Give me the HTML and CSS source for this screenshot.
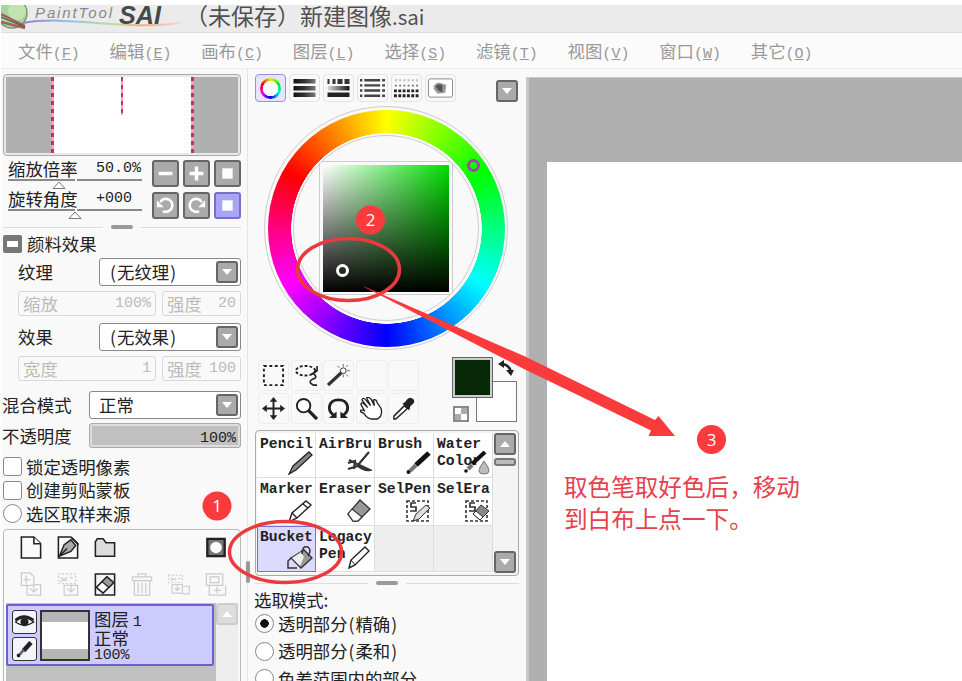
FILE: index.html
```html
<!DOCTYPE html>
<html lang="zh">
<head>
    <meta charset="UTF-8">
    <meta name="viewport" content="width=device-width, initial-scale=1.0">
    <title>PaintTool SAI</title>
    <link rel="stylesheet" href="styles.css">
</head>
<body>
<div class="app">
    <header class="titlebar">
        <svg class="logo" width="184" height="27" viewBox="0 0 184 27">
            <defs>
                <linearGradient id="rainbow">
                    <stop offset="0" stop-color="#9a7bd0"/><stop offset=".3" stop-color="#92c4f0"/>
                    <stop offset=".55" stop-color="#b5e0a0"/><stop offset=".75" stop-color="#f0b080"/>
                    <stop offset="1" stop-color="#f5dada"/>
                </linearGradient>
            </defs>
            <circle cx="11" cy="8" r="15" fill="#a9d3a0" stroke="#6d9f72" stroke-width="1.5"/>
            <circle cx="16" cy="6" r="9" fill="#c3e3b0"/>
            <path d="M0 9l24 12M0 17l24 6" stroke="#a3625c" stroke-width="2.5"/>
            <path d="M0 12l24 10" stroke="#555" stroke-width="1.2"/>
            <path d="M22 18C50 13 80 17 110 19s55 2 72-2" fill="none" stroke="url(#rainbow)" stroke-width="2"/>
            <text x="34" y="13" class="logo-paint" textLength="77">PaintTool</text>
            <text x="118" y="19" class="logo-sai" textLength="42" lengthAdjust="spacingAndGlyphs">SAI</text>
        </svg>
        <span class="doc-name">（未保存）新建图像<i class="ext">.sai</i></span>
    </header>

    <nav class="menubar">
        <span>文件<i>(<u>F</u>)</i></span>
        <span>编辑<i>(<u>E</u>)</i></span>
        <span>画布<i>(<u>C</u>)</i></span>
        <span>图层<i>(<u>L</u>)</i></span>
        <span>选择<i>(<u>S</u>)</i></span>
        <span>滤镜<i>(<u>T</u>)</i></span>
        <span>视图<i>(<u>V</u>)</i></span>
        <span>窗口<i>(<u>W</u>)</i></span>
        <span>其它<i>(<u>O</u>)</i></span>
    </nav>

    <main class="work">
        <!-- 左侧：导航器和图层 -->
        <section class="left">
            <div class="navigator"><div class="nav-page"><i></i></div></div>

            <div class="view-ctrl">
                <div class="sliders">
                    <div class="slider"><span>缩放倍率</span><b>50.0%</b>
                        <svg width="134" height="11" viewBox="0 0 134 11"><path d="M0 1h67M69 1h65" stroke="#666" stroke-width="1.6"/><path d="M51 3l6 6.500H45z" fill="#fff" stroke="#777"/></svg>
                    </div>
                    <div class="slider"><span>旋转角度</span><b>+000</b>
                        <svg width="134" height="11" viewBox="0 0 134 11"><path d="M0 1h67M69 1h65" stroke="#666" stroke-width="1.6"/><path d="M67 3l6 6.500H61z" fill="#fff" stroke="#777"/></svg>
                    </div>
                </div>
                <div class="btns">
                    <span class="btn"><svg viewBox="0 0 22 22"><path d="M3 11h16" stroke="#fff" stroke-width="4"/></svg></span>
                    <span class="btn"><svg viewBox="0 0 22 22"><path d="M3 11h16M11 3v16" stroke="#fff" stroke-width="4"/></svg></span>
                    <span class="btn"><svg viewBox="0 0 22 22"><path d="M5 5h12v12H5z" fill="#fff"/></svg></span>
                    <span class="btn"><svg viewBox="0 0 22 22"><path d="M5 7a7.500 7.500 0 1 1 3 10.500" fill="none" stroke="#fff" stroke-width="3"/><path d="M1 5v8h8z" fill="#fff"/></svg></span>
                    <span class="btn"><svg viewBox="0 0 22 22"><path d="M17 7a7.500 7.500 0 1 0-3 10.500" fill="none" stroke="#fff" stroke-width="3"/><path d="M21 5v8h-8z" fill="#fff"/></svg></span>
                    <span class="btn on"><svg viewBox="0 0 22 22"><path d="M5 5h12v12H5z" fill="#fff"/></svg></span>
                </div>
            </div>

            <div class="grip"><i></i></div>

            <div class="effect-title"><span class="fold"></span>颜料效果</div>
            <div class="row first"><label>纹理</label><div class="select"><span><i>(</i>无纹理<i>)</i></span><em class="drop"></em></div></div>
            <div class="row off"><div class="field wide">缩放<b>100%</b></div><div class="field">强度<b>20</b></div></div>
            <div class="row second"><label>效果</label><div class="select"><span><i>(</i>无效果<i>)</i></span><em class="drop"></em></div></div>
            <div class="row off"><div class="field wide">宽度<b>1</b></div><div class="field">强度<b>100</b></div></div>

            <div class="row mode"><label>混合模式</label><div class="select"><span>正常</span><em class="drop"></em></div></div>
            <div class="row opacity"><label>不透明度</label><div class="meter"><b>100%</b></div></div>

            <div class="checks">
                <div><i class="box"></i>锁定透明像素</div>
                <div><i class="box"></i>创建剪贴蒙板</div>
                <div><i class="box round"></i>选区取样来源</div>
            </div>

            <div class="layers">
                <div class="layer-tools">
                    <svg viewBox="0 0 24 26"><path d="M2 2h13l7 7v15H2z" class="ink"/><path d="M15 2v7h7" class="ink"/></svg>
                    <svg viewBox="0 0 24 26"><path d="M2 2h13l7 7v15H2z" class="ink"/><path d="M3 22l5-12 7-5 5 6-5 6z" fill="#aaa" stroke="#222" stroke-width="1.500"/><path d="M3 22l8-8M16 3l7 7" stroke="#222" stroke-width="1.500"/></svg>
                    <svg viewBox="0 0 24 26"><path d="M2 7l2-3h6l3 4h9v14H2z" fill="#ddd" stroke="#222" stroke-width="1.600"/></svg>
                    <i></i><i></i>
                    <svg viewBox="0 0 24 26"><path d="M3 4h18v18H3z" fill="#777" stroke="#222" stroke-width="2.500"/><circle cx="12" cy="13" r="6" fill="#fff"/></svg>
                    <svg viewBox="0 0 24 26" class="dim"><path d="M2 1h9l4 4v9H2zM7 4v8M4 8h7M8 14v10h14V13h-7M15 13v8m-4-4l4 4 4-4"/></svg>
                    <svg viewBox="0 0 24 26" class="dim"><path d="M2 2h18v10H2z" stroke-dasharray="2 2"/><path d="M4 6l7 3M4 10l7-4M14 6h3M8 14h14v10H8zM15 13v8m-4-4l4 4 4-4"/></svg>
                    <svg viewBox="0 0 24 26"><path d="M2 2h20v22H2z" fill="#f4f4f4" stroke="#222" stroke-width="1.600"/><path d="M3 16L14 5l7 6-11 11z" fill="#fff" stroke="#222" stroke-width="1.600"/><path d="M9 10L14 5l7 6-5 5z" fill="#999" stroke="#222" stroke-width="1.300"/></svg>
                    <svg viewBox="0 0 24 26" class="dim"><path d="M2 5h20v4H2zM8 5V2h8v3M4 9v15h16V9M8 11v11M12 11v11M16 11v11"/></svg>
                    <svg viewBox="0 0 28 26" class="dim"><path d="M2 2h16v9H2z" stroke-dasharray="2 2"/><path d="M4 5l6 3M4 9l6-3M13 6h3M6 13h12v10H6zM12 12v8m-3-3l3 3 3-3M18 15h8v9h-8"/></svg>
                    <svg viewBox="0 0 24 26" class="dim"><path d="M2 2h17v12H2zM6 5h9v6H6zM5 14v10h17V14M13 15v7M10 19h7"/></svg>
                </div>
                <div class="layer-list">
                    <div class="layer">
                        <div class="flags">
                            <svg viewBox="0 0 24 24"><path d="M2 12q9-9 20 0-10 7-20 0" fill="#fff" stroke="#222" stroke-width="1.500"/><circle cx="12" cy="12" r="4.500" fill="#222"/><path d="M2 10q9-8 20 0" fill="none" stroke="#222" stroke-width="2.500"/></svg>
                            <svg viewBox="0 0 24 24"><path d="M19 5l-8 9" stroke="#222" stroke-width="5"/><path d="M11 13l-4 5" stroke="#666" stroke-width="3"/><circle cx="5.500" cy="19" r="2" fill="#222"/></svg>
                        </div>
                        <div class="thumb"></div>
                        <div class="layer-info"><span>图层 <b>1</b></span><span>正常</span><b>100%</b></div>
                    </div>
                    <div class="track"><em class="up"></em></div>
                </div>
            </div>
        </section>

        <!-- 中间：颜色和画笔 -->
        <section class="middle">
            <i class="vgrip"></i>
            <div class="tabs">
                <span class="on"><i class="mini-wheel"></i></span>
                <span><svg viewBox="0 0 24 20"><path d="M1 1h22v4.500H1zM1 8h22v4.500H1zM1 14.500h22V19H1z" fill="url(#bar)"/></svg></span>
                <span><svg viewBox="0 0 24 20"><path d="M1 1h2v5H1zM6 1h3v5H6zM11 1h5v5h-5zM18 1h5v5h-5z" fill="#333"/><path d="M1 8h22v4.500H1z" fill="url(#bar2)"/><path d="M1 14.500h22V19H1z" fill="#222"/></svg></span>
                <span><svg viewBox="0 0 26 20"><path d="M0 2h26M0 7.300h26M0 12.600h26M0 18h26" stroke="#444" stroke-width="2.500"/><path d="M3.500 0v20M22 0v20" stroke="#fdfdfd" stroke-width="2"/></svg></span>
                <span><svg viewBox="0 0 26 20"><path d="M1 2h24" stroke="#bbb" stroke-width="2" stroke-dasharray="2 2.400"/><path d="M1 7.500h24" stroke="#777" stroke-width="2" stroke-dasharray="2 2.400"/><path d="M0 13h26M0 18h26" stroke="#222" stroke-width="3" stroke-dasharray="3 1.500"/></svg></span>
                <span><svg viewBox="0 0 26 20"><rect x=".5" y=".5" width="25" height="19" rx="2" fill="#fff" stroke="#888"/><path d="M6 8q3-5 8-3l5 2-1 8-8 1-4-5z" fill="#999"/><path d="M8 8q3-3 7-1v7q-5 0-7-6" fill="#555"/></svg></span>
                <em class="drop"></em>
            </div>
            <svg class="defs" width="0" height="0"><defs>
                <linearGradient id="bar"><stop offset="0" stop-color="#111"/><stop offset=".5" stop-color="#333"/><stop offset="1" stop-color="#777"/></linearGradient>
                <linearGradient id="bar2"><stop offset="0" stop-color="#ddd"/><stop offset="1" stop-color="#111"/></linearGradient>
            </defs></svg>

            <div class="wheel">
                <div class="hue"></div>
                <svg class="wheel-lines" viewBox="0 0 244 244"><circle cx="122" cy="122" r="121.500"/><circle cx="122" cy="122" r="92.500"/><path d="M57 55.500h130M55.500 57v130M188.500 57v130M57 188.500h130"/></svg>
                <div class="sv"></div>
                <i class="hue-mark"></i><i class="sv-mark"></i>
            </div>

            <div class="tool-row">
                <div class="tools">
                    <span><svg viewBox="0 0 24 24"><path d="M2 2h20v20H2z" fill="none" stroke="#222" stroke-width="2" stroke-dasharray="3 2.700"/></svg></span>
                    <span><svg viewBox="0 0 24 24"><ellipse cx="11" cy="7" rx="10" ry="5" fill="none" stroke="#222" stroke-width="2" stroke-dasharray="3 2"/><path d="M23 2v5l-6 4M19 10q6 4-1 6-5 3 1 6h4" fill="none" stroke="#222" stroke-width="1.700"/></svg></span>
                    <span><svg viewBox="0 0 24 24"><path d="M1 22L16 8" stroke="#333" stroke-width="3.500"/><circle cx="17" cy="7" r="3" fill="#fff" stroke="#333"/><path d="M17 0v3M24 7h-3M11 2l2 2M22 1l-2 2M22 13l-2-2M17 14v-3" stroke="#666"/></svg></span>
                    <span></span><span></span>
                    <span><svg viewBox="0 0 24 24"><path d="M12 3v18M3 12h18" stroke="#222" stroke-width="2"/><path d="M12 0l4 5H8zM12 24l4-5H8zM0 12l5-4v8zM24 12l-5-4v8z" fill="#222"/></svg></span>
                    <span><svg viewBox="0 0 24 24"><circle cx="9" cy="9" r="7" fill="#fff" stroke="#222" stroke-width="2"/><path d="M14 14l9 9" stroke="#222" stroke-width="3.500"/></svg></span>
                    <span><svg viewBox="0 0 24 24"><path d="M9 20C-1 15 1 3 12 3s13 12 3 17" fill="none" stroke="#222" stroke-width="3"/><path d="M2 22h8v-7zM22 22h-8v-7z" fill="#222"/></svg></span>
                    <span><svg viewBox="0 0 24 24"><path d="M5 15L1 8q0-3 3-1l4 4-6-8q1-3 4 0l5 6-4-8q2-2 5 2l3 6-1-6q3-1 4 3l4 6q2 8-4 11h-6q-5-1-8-6l-4-2q0-2 4-1" fill="#fff" stroke="#222" stroke-width="1.400"/></svg></span>
                    <span><svg viewBox="0 0 24 24"><path d="M13 9l3 3L4 23H2v-3z" fill="#fff" stroke="#222" stroke-width="1.500"/><path d="M11 7l7 7 1-4 4-4q1-4-3-5-3-1-6 4z" fill="#222"/></svg></span>
                </div>
                <div class="swatches">
                    <i class="bg"></i><i class="fg"></i>
                    <svg class="swap" viewBox="0 0 16 16"><path d="M3 4q8 0 10 8" fill="none" stroke="#222" stroke-width="2.500"/><path d="M0 4l6-4v8zM13 16l-5-6h8z" fill="#222"/></svg>
                    <svg class="clear" viewBox="0 0 16 16"><path d="M1 1h14v14H1z" fill="#fff" stroke="#666" stroke-width="1.500"/><path d="M8 2h6v6H8zM2 8h6v6H2z" fill="#aaa"/></svg>
                </div>
            </div>

            <div class="brush-panel">
                <div class="brushes">
                    <div>Pencil<svg viewBox="0 0 26 24"><path d="M2 23l4-8L22 1l3 3L9 19z" fill="#888" stroke="#222" stroke-width="1.300"/></svg></div>
                    <div>AirBru<svg viewBox="0 0 26 24"><path d="M12 14L23 1M3 9l8 4 13 6q-6 1-12-4l-10 3M2 12l7-2-1 8" fill="none" stroke="#333" stroke-width="2.200"/></svg></div>
                    <div>Brush<svg viewBox="0 0 26 24"><path d="M11 14L24 2" stroke="#111" stroke-width="5"/><path d="M11 14l-6 6" stroke="#777" stroke-width="4"/><circle cx="3.500" cy="21" r="2" fill="#111"/></svg></div>
                    <div>Water<br>Color<svg viewBox="0 0 26 24"><path d="M8 13L21 1" stroke="#111" stroke-width="4"/><path d="M8 14l-4 4" stroke="#777" stroke-width="4"/><circle cx="2" cy="20" r="1.800" fill="#111"/><path d="M20 10q10 13 0 13t0-13" fill="#bbb" stroke="#777"/></svg></div>
                    <div>Marker<svg viewBox="0 0 26 24"><path d="M2 23l3-9L19 2l5 4L10 19z" fill="#fff" stroke="#222" stroke-width="1.400"/><path d="M5 14l5 5M16 5l5 4M2 23l5-2" stroke="#222" stroke-width="1.300"/></svg></div>
                    <div>Eraser<svg viewBox="0 0 26 24"><path d="M2 15L14 1l10 9-12 12H7z" fill="#999" stroke="#333" stroke-width="1.300"/><path d="M2 15l4-5 10 8-4 4H7z" fill="#fff" stroke="#333" stroke-width="1.200"/></svg></div>
                    <div>SelPen<svg viewBox="0 0 26 24"><path d="M2 2h21v20H2z" fill="none" stroke="#333" stroke-width="1.600" stroke-dasharray="3 2"/><path d="M11 4H6v4h5v4H5" fill="none" stroke="#333" stroke-width="1.700"/><path d="M8 22l3-7L21 6l4 3-11 11z" fill="#ddd" stroke="#333"/></svg></div>
                    <div>SelEra<svg viewBox="0 0 26 24"><path d="M2 2h21v20H2z" fill="none" stroke="#333" stroke-width="1.600" stroke-dasharray="3 2"/><path d="M11 4H6v4h5v4H5" fill="none" stroke="#333" stroke-width="1.700"/><path d="M9 15l8-9 8 6-9 9z" fill="#888" stroke="#333"/><path d="M9 15l3-3 7 6-3 3z" fill="#fff" stroke="#333"/></svg></div>
                    <div class="on">Bucket<svg viewBox="0 0 26 24"><path d="M4 13L17 5l8 8-11 10z" fill="#999" stroke="#333" stroke-width="1.400"/><path d="M5 13l9-6 3 5-4 9z" fill="#eee"/><path d="M15 9q0-9 6-7 4 3 0 9M4 13l-3 3v7h9" fill="none" stroke="#333" stroke-width="1.500"/></svg></div>
                    <div>Legacy<br>Pen<svg viewBox="0 0 26 24"><path d="M3 23l2-8L19 2l4 4L9 20z" fill="#fff" stroke="#222" stroke-width="1.400"/><path d="M5 15l4 5" stroke="#222"/></svg></div>
                    <div class="none"></div>
                    <div class="none"></div>
                </div>
                <div class="scroll"><em class="drop up-arrow"></em><i></i><em class="drop down"></em></div>
            </div>

            <div class="grip"><i></i></div>

            <div class="options">
                <h4>选取模式<i>:</i></h4>
                <div><i class="box round checked"></i><span>透明部分<i>(</i>精确<i>)</i></span></div>
                <div><i class="box round"></i><span>透明部分<i>(</i>柔和<i>)</i></span></div>
                <div><i class="box round"></i><span>色差范围内的部分</span></div>
            </div>
        </section>

        <section class="canvas"><div class="paper"><p>取色笔取好色后，移动<br>到白布上点一下。</p></div></section>
    </main>

    <!-- 教程标注 -->
    <svg class="notes" width="962" height="681" viewBox="0 0 962 681">
        <ellipse cx="285.500" cy="552" rx="56" ry="30.500"/>
        <ellipse cx="348.500" cy="269.500" rx="51" ry="31"/>
        <path d="M363 286L524 356L655 420L658.500 416L675 436H648.500L651 430.500L524 369L366 288z"/>
        <circle cx="217" cy="506" r="14.500"/><text x="217" y="512">1</text>
        <circle cx="370.500" cy="220" r="14.500"/><text x="370.500" y="226">2</text>
        <circle cx="711.500" cy="439.500" r="14.500"/><text x="711.500" y="445.500">3</text>
    </svg>
</div>
</body>
</html>
```
FILE: styles.css
```css
* {
    margin: 0;
    padding: 0;
    box-sizing: border-box;
}

html, body {
    width: 100%;
    height: 100%;
    overflow: hidden;
    background: #fff;
}

body {
    font: 17.4px/20px "Noto Sans CJK SC", sans-serif;
    color: #222;
}

i, em {
    font-style: normal;
}

b {
    font: 15px/20px "Liberation Mono", monospace;
}

svg {
    display: block;
}

.app {
    position: relative;
    height: 681px;
    padding: 5px 0 0 1px;
    display: flex;
    flex-direction: column;
    overflow: hidden;
}

.titlebar {
    display: flex;
    flex: 0 0 28px;
    background: #ebebeb;
    border-bottom: 1px solid #ddd;
}

.logo-paint {
    font: italic 15px "Liberation Sans", sans-serif;
    fill: #888;
}

.logo-sai {
    font: italic bold 25px "Liberation Sans", sans-serif;
    fill: #484848;
}

.doc-name {
    font-size: 23px;
    line-height: 21px;
    color: #505050;
    white-space: nowrap;
}

.doc-name .ext {
    font-size: 20.5px;
}

.menubar {
    flex: 0 0 35px;
    display: flex;
    padding-left: 17px;
    background: #fbfbfb;
    border-bottom: 1px solid #eee;
    color: #999;
    line-height: 35px;
}

.menubar span {
    flex: 0 0 91.6px;
    white-space: nowrap;
}

.menubar i {
    font: 15px "Liberation Mono", monospace;
}

.work {
    flex: 1;
    display: flex;
    background: #f9f9f9;
    min-height: 0;
}

.left {
    flex: 0 0 247px;
    min-width: 0;
    padding: 5px 6px 0 2px;
    border-right: 1px solid #e4e4e4;
}

.navigator {
    height: 82px;
    border: 1px solid #aaa;
    border-radius: 4px;
    padding: 2px;
    background: #e8e8e8;
}

.nav-page {
    height: 76px;
    background: linear-gradient(90deg, #b0b0b0 46px, #fff 46px, #fff 186px, #b0b0b0 186px);
    display: flex;
    padding-left: 45px;
}

.nav-page::before, .nav-page::after, .nav-page i {
    content: "";
    width: 3px;
    height: 76px;
    background: repeating-linear-gradient(#b83860 0 4px, #ff9cbc 4px 8px);
}

.nav-page i {
    width: 2px;
    height: 38px;
    margin: 0 68px 0 67px;
}

.view-ctrl {
    display: flex;
    justify-content: space-between;
    padding: 4px 0 0 5px;
}

.slider {
    display: flex;
    flex-wrap: wrap;
    justify-content: space-between;
    width: 134px;
    height: 30px;
    line-height: 18px;
}

.slider b {
    width: 46px;
    line-height: 18px;
}

.btns {
    display: grid;
    grid-template-columns: repeat(3, 27px);
    gap: 4px;
}

.btn {
    height: 27px;
    border: 2px solid #666;
    border-radius: 3px;
    background: #aaa;
    padding: 2px;
}

.btn.on {
    background: #a9a4f4;
    border-color: #7770c8;
}

.grip {
    display: flex;
    align-items: center;
    gap: 8px;
    height: 10px;
}

.grip::before, .grip::after {
    content: "";
    flex: 1;
    height: 1px;
    background: #ddd;
}

.grip i {
    width: 22px;
    height: 4px;
    border-radius: 2px;
    background: #999;
}

.left .grip {
    margin-top: 2px;
}

.effect-title {
    display: flex;
    align-items: center;
    gap: 5px;
    height: 18px;
    margin-top: 3px;
}

.fold {
    width: 19px;
    height: 18px;
    border: 6px solid #777;
    border-width: 6px 4px;
    border-radius: 2px;
    background: #fff;
}

.row {
    display: flex;
    align-items: center;
    height: 27px;
    margin-top: 6px;
}

.row label {
    flex: 0 0 96px;
    padding-left: 15px;
}

.row.first {
    margin-top: 5px;
}

.row.second {
    margin-top: 7px;
}

.select {
    flex: 1;
    display: flex;
    align-items: center;
    justify-content: space-between;
    height: 28px;
    padding: 0 2px 0 9px;
    border: 1px solid #888;
    border-radius: 3px;
    background: #fff;
}

.select i {
    display: inline-block;
    width: 8px;
    text-align: center;
}

.drop, .up {
    width: 22px;
    height: 22px;
    border: 2px solid #666;
    border-radius: 3px;
    background: #aaa;
    display: flex;
    align-items: center;
    justify-content: center;
}

.drop::after {
    content: "";
    border: 5px solid transparent;
    border-top: 6px solid #fff;
    border-bottom: 0;
}

.row.off {
    height: 25px;
    padding-left: 15px;
    gap: 6px;
    color: #bbb;
}

.field {
    flex: 1;
    display: flex;
    align-items: center;
    justify-content: space-between;
    height: 25px;
    padding: 0 4px;
    border: 1px solid #d8d8d8;
    border-radius: 3px;
    white-space: nowrap;
}

.field.wide {
    flex: 0 0 138px;
}

.row.mode {
    height: 28px;
    margin-top: 10px;
}

.row.mode label, .row.opacity label {
    flex-basis: 86px;
    padding: 0;
    margin: 0 1px 0 -1px;
}

.row.opacity {
    height: 25px;
    margin-top: 4px;
}

.meter {
    flex: 1;
    height: 25px;
    padding: 1px 4px;
    border: 1px solid #aaa;
    border-radius: 3px;
    background: #c0c0c0;
    box-shadow: inset 0 0 0 2px #ddd;
    text-align: right;
}

.checks {
    margin-top: 7px;
}

.checks div {
    display: flex;
    align-items: center;
    gap: 4px;
    height: 23.6px;
}

.box {
    flex: 0 0 19px;
    height: 19px;
    border: 1.5px solid #888;
    border-radius: 3px;
    background: #fff;
}

.box.round {
    border-radius: 50%;
}

.box.checked {
    background: radial-gradient(#111 4px, #fff 4.5px);
}

.layers {
    height: 170px;
    margin-top: 3px;
    padding: 0 2px;
    border: 1.5px solid #bbb;
    border-radius: 4px;
}

.layer-tools {
    display: grid;
    grid-template-columns: repeat(6, 37px);
    grid-template-rows: 36px 37px;
    align-items: center;
    justify-items: center;
    padding-left: 6px;
    height: 73px;
}

.layer-tools svg {
    width: 24px;
    height: 25px;
}

.ink {
    fill: #fafafa;
    stroke: #222;
    stroke-width: 1.6;
}

.dim {
    fill: none;
    stroke: #ccc;
    stroke-width: 1.3;
}

.layer-list {
    display: flex;
    gap: 2px;
    height: 95px;
    background: #c0c0c0;
}

.layer {
    display: flex;
    gap: 3px;
    width: 209px;
    height: 62px;
    margin-top: 1px;
    padding: 4px;
    border: 2px solid #6e60ce;
    border-radius: 2px;
    background: #cdcbff;
}

.flags {
    display: grid;
    gap: 3px;
}

.flags svg {
    width: 25px;
    height: 24px;
    border: 1.5px solid #333;
    border-radius: 3px;
    background: #f4f4ff;
}

.thumb {
    width: 50px;
    height: 51px;
    border: 2px solid #333;
    background: linear-gradient(#b5b5b5 10px, #fff 10px 37px, #b5b5b5 37px);
}

.layer-info {
    display: flex;
    flex-direction: column;
    margin: -1px 0 0 1px;
    line-height: 19px;
    white-space: nowrap;
}

.layer-info span {
    height: 19px;
}

.layer-info > b {
    line-height: 17px;
    letter-spacing: -.2px;
}

.track {
    flex: 1;
    background: #eee;
}

.up {
    border-color: #ccc;
    background: #ddd;
}

.up::after, .up-arrow::after {
    content: "";
    border: 5px solid transparent;
    border-bottom: 6px solid #fff;
    border-top: 0;
}

.middle {
    position: relative;
    flex: 0 0 278px;
    min-width: 0;
    padding: 5px 7px 0 7px;
}

.vgrip {
    position: absolute;
    left: -2px;
    top: 492px;
    width: 4px;
    height: 22px;
    border-radius: 2px;
    background: #999;
}

.tabs {
    display: flex;
    gap: 3px;
    height: 28px;
}

.tabs span {
    flex: 0 0 31px;
    height: 28px;
    border: 1px solid #e4e4e4;
    border-radius: 4px;
    display: flex;
    align-items: center;
    justify-content: center;
}

.tabs span.on {
    border: 1.5px solid #9690e4;
    background: #e6e4ff;
}

.tabs svg {
    width: 25px;
    height: 20px;
}

.tabs .drop {
    margin: 6px 1px 0 auto;
}

.mini-wheel {
    width: 21px;
    height: 21px;
    border-radius: 50%;
    background: radial-gradient(#f8f8ff 7.5px, transparent 8px), conic-gradient(#ee0, #0e0, #0ee, #00e, #e0e, #e00, #ee0);
}

.defs {
    position: absolute;
}

.wheel {
    position: relative;
    width: 244px;
    height: 244px;
    margin: 4px 0 0 9px;
}

.hue {
    position: absolute;
    inset: 3.5px;
    border-radius: 50%;
    background: radial-gradient(#f9f9f9 95px, transparent 95.5px), conic-gradient(#ff0, #0f0, #0ff, #00f, #f0f, #f00, #ff0);
}

.wheel-lines {
    position: absolute;
    inset: 0;
    fill: none;
    stroke: #ccc;
    stroke-width: 1;
}

.sv {
    position: absolute;
    left: 59px;
    top: 59px;
    width: 126px;
    height: 127px;
    background: linear-gradient(transparent, #000), linear-gradient(90deg, #fff, #0d0);
}

.hue-mark, .sv-mark {
    position: absolute;
    left: 203px;
    top: 53px;
    width: 13px;
    height: 13px;
    border: 3px solid #a044aa;
    border-radius: 50%;
}

.sv-mark {
    left: 72px;
    top: 158px;
    border-color: #fff;
}

.tool-row {
    display: flex;
    height: 68px;
    margin: 10px 0 0 3px;
}

.tools {
    display: grid;
    grid-template-columns: repeat(5, 31px);
    grid-template-rows: 31px 31px;
    gap: 2px 1.5px;
}

.tools span {
    border: 1px solid #ededed;
    border-radius: 3px;
    display: flex;
    align-items: center;
    justify-content: center;
}

.tools svg {
    width: 23px;
    height: 23px;
}

.swatches {
    position: relative;
    width: 72px;
    margin-left: 30px;
}

.swatches i, .swatches svg {
    position: absolute;
}

.fg {
    left: 3px;
    top: -3px;
    width: 41px;
    height: 41px;
    border: 1.5px solid #666;
    background: #062806;
    box-shadow: inset 0 0 0 2px #ccc;
}

.bg {
    left: 27px;
    top: 21px;
    width: 41px;
    height: 41px;
    border: 1.5px solid #777;
    background: #fff;
}

.swap {
    left: 49px;
    top: 0;
    width: 16px;
    height: 16px;
}

.clear {
    left: 4px;
    top: 46px;
    width: 16px;
    height: 16px;
}

.brush-panel {
    display: flex;
    height: 146px;
    margin-top: 2px;
    padding: 2px 2px 2px 1px;
    border: 1.5px solid #aaa;
    border-radius: 4px;
    background: #f4f4f4;
}

.brushes {
    display: grid;
    grid-template-columns: repeat(4, 59px);
    grid-template-rows: 45px 48px 46px;
    background: #fff;
    font: bold 14.7px/17px "Liberation Mono", monospace;
}

.brushes div {
    position: relative;
    padding: 3px 0 0 3px;
    border: solid #ddd;
    border-width: 0 1px 1px 0;
    white-space: nowrap;
}

.brushes svg {
    position: absolute;
    right: 2px;
    bottom: 2px;
    width: 26px;
    height: 24px;
}

.brushes .on {
    border: 1.5px solid #7a6ed2;
    background: #dcdbff;
    padding: 2px 0 0 2px;
}

.brushes .none {
    background: #eee;
}

.scroll {
    display: flex;
    flex-direction: column;
    gap: 3px;
    margin-left: 1px;
}

.scroll i {
    width: 22px;
    height: 8px;
    border: 2px solid #777;
    border-radius: 3px;
    background: #bbb;
}

.scroll .down {
    margin-top: auto;
}

.up-arrow::after {
    border: 5px solid transparent;
    border-bottom: 6px solid #fff;
    border-top: 0;
}

.middle .grip {
    margin-top: 2px;
}

.options {
    padding-top: 2px;
}

.options h4 {
    font-size: 17.4px;
    font-weight: normal;
    line-height: 20px;
    margin-left: -1px;
}

.options div {
    display: flex;
    align-items: center;
    gap: 4px;
    height: 27.5px;
}

.options span i {
    margin: 0 1px;
}

.canvas {
    flex: 1;
    margin-top: 8px;
    padding: 84px 0 0 18px;
    border: solid #c8c8c8;
    border-width: 1px 0 0 3px;
    background: #b0b0b0;
}

.paper {
    height: 100%;
    background: #fff;
    padding: 308px 0 0 17px;
}

.paper p {
    font-size: 23.6px;
    line-height: 32px;
    color: #e8404c;
}

.notes {
    position: absolute;
    left: 0;
    top: 0;
}

.notes ellipse {
    fill: none;
    stroke: #ea3a3e;
    stroke-width: 3.5;
}

.notes path, .notes circle {
    fill: #fb3a3c;
}

.notes text {
    font: 17px "Open Sans", sans-serif;
    fill: #fff;
    text-anchor: middle;
}
```
